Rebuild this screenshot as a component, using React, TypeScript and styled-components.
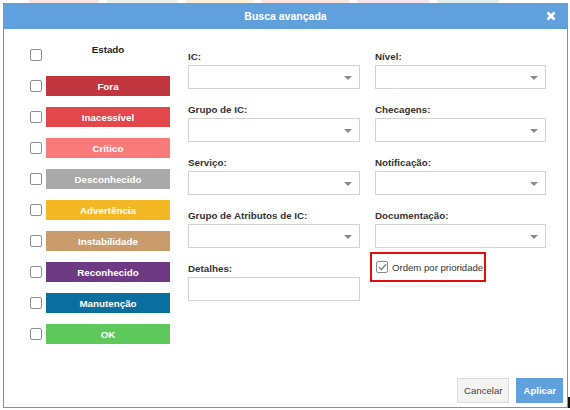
import React from "react";
import styled, { createGlobalStyle } from "styled-components";

const GlobalStyle = createGlobalStyle`
  html, body {
    margin: 0;
    padding: 0;
    background: #ffffff;
    font-family: "Liberation Sans", Arial, sans-serif;
  }
`;

const Page = styled.div`
  position: relative;
  width: 570px;
  height: 410px;
  overflow: hidden;
`;

// faded tags of the page behind the dialog
const Backdrop = styled.div`
  display: flex;
  height: 3px;
  gap: 8px;
  padding-left: 29px;
`;

const BackTag = styled.span<{ $color: string; $w: number }>`
  width: ${(p) => p.$w}px;
  background: ${(p) => p.$color};
`;

const Modal = styled.div`
  box-sizing: border-box;
  margin-left: 3px;
  width: 565px;
  height: 405px;
  border: 1px solid #5b9bd9;
  border-top: none;
  display: flex;
  flex-direction: column;
  background: #fff;
`;

const Header = styled.div`
  position: relative;
  height: 26px;
  background: #5fa0dd;
  color: #fff;
  font-weight: bold;
  font-size: 10.5px;
  display: flex;
  align-items: center;
  justify-content: center;
  margin: 0 -1px;
`;

const Close = styled.span`
  position: absolute;
  right: 12px;
  top: 8px;
  width: 10px;
  height: 10px;
`;

const Body = styled.div`
  flex: 1;
  display: flex;
`;

const StatusColumn = styled.div`
  width: 142px;
  padding: 16px 0 0 26px;
  display: flex;
  flex-direction: column;
  gap: 11px;
`;

const StatusRow = styled.div<{ $top?: boolean }>`
  height: 20px;
  display: flex;
  align-items: ${(p) => (p.$top ? "flex-start" : "center")};
  gap: 4px;
`;

const Check = styled.span`
  box-sizing: border-box;
  flex: none;
  width: 12px;
  height: 12px;
  border: 1.5px solid #8d8d8d;
  border-radius: 2px;
  background: #fff;
  display: flex;
  align-items: center;
  justify-content: center;
  align-self: center;
`;

const StatusBar = styled.div<{ $bg: string }>`
  width: 124px;
  height: 20px;
  background: ${(p) => p.$bg};
  color: #fff;
  font-weight: bold;
  font-size: 9.8px;
  display: flex;
  align-items: center;
  justify-content: center;
`;

const ColumnTitle = styled.div`
  width: 124px;
  text-align: center;
  color: #222;
  font-weight: bold;
  font-size: 9.8px;
  line-height: 10px;
`;

const FormColumn = styled.div<{ $left: number; $width: number }>`
  width: ${(p) => p.$width}px;
  margin-left: ${(p) => p.$left}px;
  padding-top: 21px;
  display: flex;
  flex-direction: column;
  gap: 14px;
`;

const Field = styled.div`
  display: flex;
  flex-direction: column;
  gap: 2px;
`;

const Label = styled.label`
  height: 13px;
  line-height: 13px;
  font-size: 9.8px;
  font-weight: bold;
  color: #333;
`;

const Box = styled.div`
  position: relative;
  box-sizing: border-box;
  height: 24px;
  border: 1px solid #d3d3d3;
  background: #fff;
`;

const Caret = styled.span`
  position: absolute;
  right: 7px;
  top: 10px;
  width: 0;
  height: 0;
  border-left: 4px solid transparent;
  border-right: 4px solid transparent;
  border-top: 4px solid #8a8a8a;
`;

const Highlight = styled.div`
  box-sizing: border-box;
  width: 116px;
  height: 30px;
  margin: -10px 0 0 -5px;
  border: 2px solid #e10b0b;
  display: flex;
  align-items: center;
  gap: 4px;
  padding-left: 4px;
  font-size: 9.6px;
  color: #333;
`;

const Footer = styled.div`
  display: flex;
  justify-content: flex-end;
  gap: 7px;
  padding: 0 4px 4px 0;
`;

const Button = styled.button<{ $primary?: boolean }>`
  box-sizing: border-box;
  height: 25px;
  padding: 0 6px;
  font-family: inherit;
  font-size: 9.6px;
  font-weight: ${(p) => (p.$primary ? "bold" : "normal")};
  color: ${(p) => (p.$primary ? "#fff" : "#444")};
  background: ${(p) => (p.$primary ? "#5fa0dd" : "#f4f4f4")};
  border: 1px solid ${(p) => (p.$primary ? "#5fa0dd" : "#dcdcdc")};
  border-radius: 0;
`;

const Cursor = styled.span`
  position: absolute;
  right: 0;
  top: 397px;
  width: 2px;
  height: 11px;
  background: #111;
`;

const statuses = [
  { label: "Fora", color: "#c1363e" },
  { label: "Inacessível", color: "#e2474b" },
  { label: "Crítico", color: "#f87b7a" },
  { label: "Desconhecido", color: "#a9a9a9" },
  { label: "Advertência", color: "#f5b825" },
  { label: "Instabilidade", color: "#c99b6b" },
  { label: "Reconhecido", color: "#6d3a83" },
  { label: "Manutenção", color: "#0a6f9f" },
  { label: "OK", color: "#5dc95d" },
];

const leftFields = ["IC:", "Grupo de IC:", "Serviço:", "Grupo de Atributos de IC:"];
const rightFields = ["Nível:", "Checagens:", "Notificação:", "Documentação:"];

const backTags = [
  { color: "#f9e3e4", w: 70 },
  { color: "#efefef", w: 70 },
  { color: "#fcf0da", w: 68 },
  { color: "#fae6de", w: 88 },
  { color: "#f3e3ee", w: 72 },
  { color: "#e0efed", w: 62 },
];

function Select() {
  return (
    <Box>
      <Caret />
    </Box>
  );
}

function CheckMark() {
  return (
    <svg width="9" height="8" viewBox="0 0 9 8">
      <path d="M1 4.2 L3.4 6.5 L8 1.2" fill="none" stroke="#8a8a8a" strokeWidth="1.6" />
    </svg>
  );
}

export default function App() {
  return (
    <Page>
      <GlobalStyle />
      <Backdrop>
        {backTags.map((t, i) => (
          <BackTag key={i} $color={t.color} $w={t.w} />
        ))}
      </Backdrop>
      <Modal>
        <Header>
          Busca avançada
          <Close>
            <svg width="10" height="10" viewBox="0 0 10 10">
              <path d="M1.5 1.5 L8.5 8.5 M8.5 1.5 L1.5 8.5" stroke="#fff" strokeWidth="2.6" />
            </svg>
          </Close>
        </Header>
        <Body>
          <StatusColumn>
            <StatusRow $top>
              <Check />
              <ColumnTitle>Estado</ColumnTitle>
            </StatusRow>
            {statuses.map((s) => (
              <StatusRow key={s.label}>
                <Check />
                <StatusBar $bg={s.color}>{s.label}</StatusBar>
              </StatusRow>
            ))}
          </StatusColumn>
          <FormColumn $left={16} $width={172}>
            {leftFields.map((f) => (
              <Field key={f}>
                <Label>{f}</Label>
                <Select />
              </Field>
            ))}
            <Field>
              <Label>Detalhes:</Label>
              <Box />
            </Field>
          </FormColumn>
          <FormColumn $left={15} $width={171}>
            {rightFields.map((f) => (
              <Field key={f}>
                <Label>{f}</Label>
                <Select />
              </Field>
            ))}
            <Highlight>
              <Check>
                <CheckMark />
              </Check>
              Ordem por prioridade
            </Highlight>
          </FormColumn>
        </Body>
        <Footer>
          <Button>Cancelar</Button>
          <Button $primary>Aplicar</Button>
        </Footer>
      </Modal>
      <Cursor />
    </Page>
  );
}
